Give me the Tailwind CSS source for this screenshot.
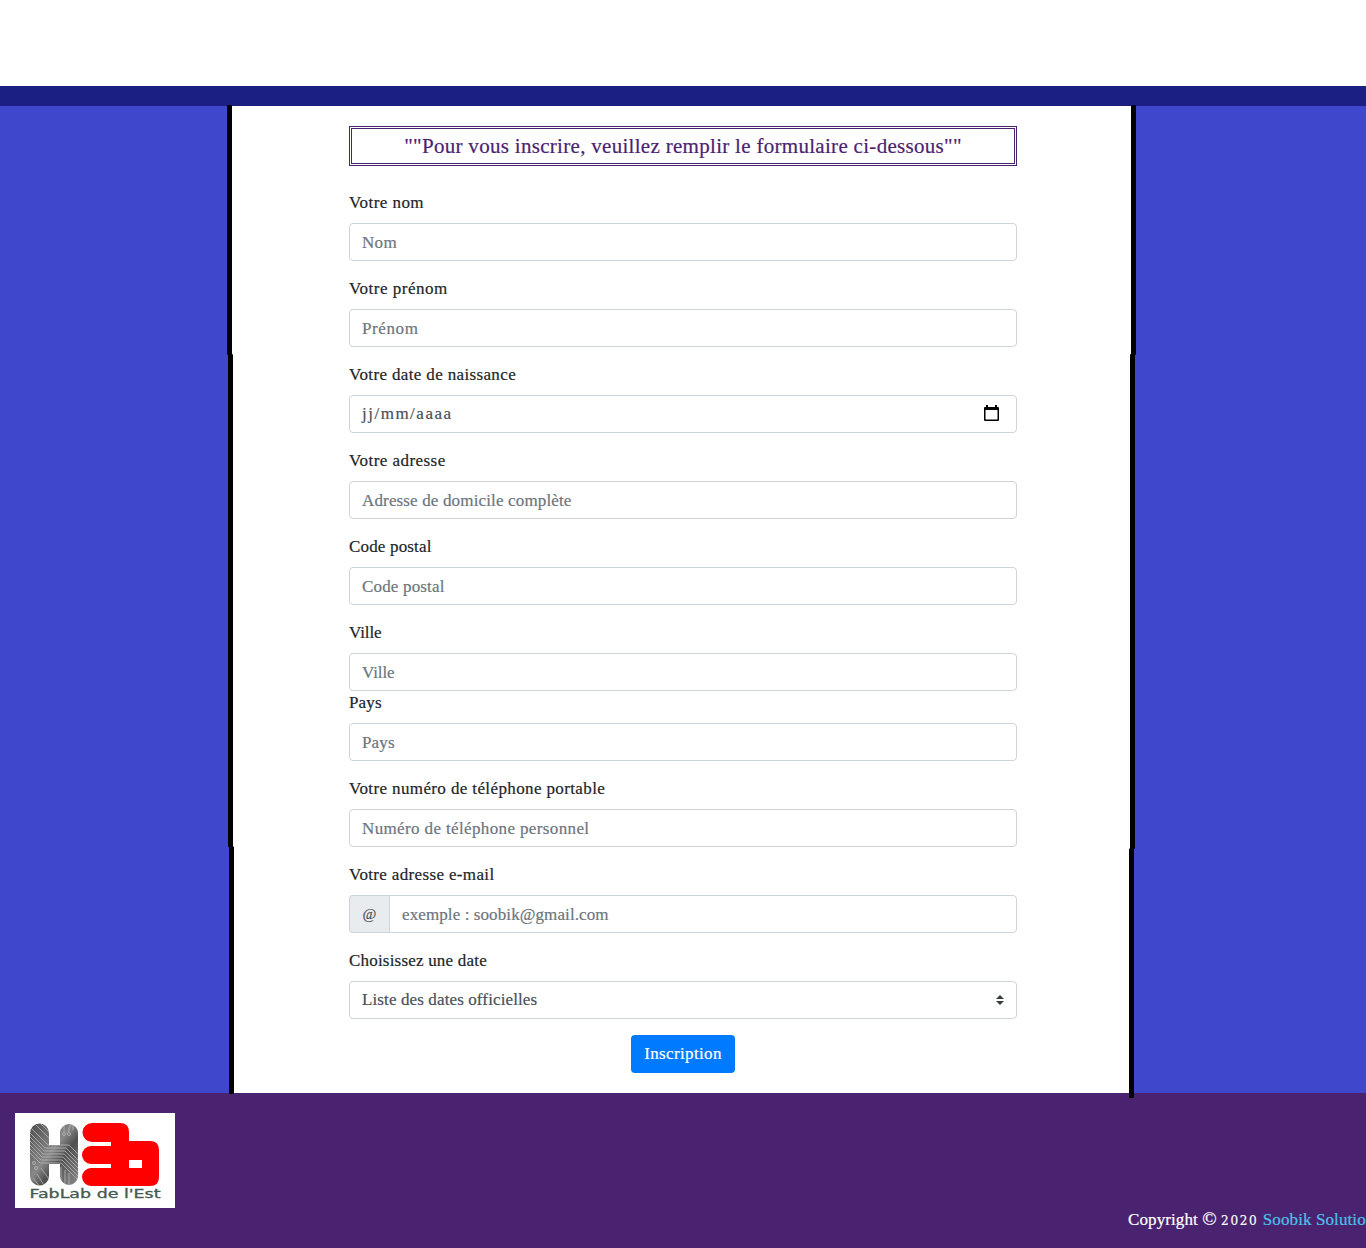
<!DOCTYPE html>
<html lang="fr">
<head>
<meta charset="utf-8">
<title>Inscription</title>
<script src="https://cdn.jsdelivr.net/npm/@tailwindcss/browser@4"></script>
</head>
<body class="relative h-[1248px] overflow-hidden bg-white font-['Georgia','Liberation_Serif',serif] text-[17px] leading-6 text-[#212529] [-webkit-text-stroke:0.2px]">
<header class="h-[106px] border-b-[20px] border-[#1b1f84] bg-white"></header>
<main class="flex h-[987px] justify-center bg-[#3f48cc]">
  <div class="w-[902px] bg-white pt-5">
    <form class="mx-auto w-[668px]">
      <h1 class="mb-[25px] h-10 border-3 border-double border-[#4a2370] text-center text-[21px] leading-[34px] tracking-[0.3px] text-[#4a2370]">""Pour vous inscrire, veuillez remplir le formulaire ci-dessous""</h1>
      <div class="mb-4"><label class="mb-2 block tracking-[0.45px]">Votre nom</label><input class="block h-[38px] w-full rounded border border-[#ced4da] px-3 pt-0.5 tracking-[0.3px] placeholder:text-[#6c757d]" placeholder="Nom"></div>
      <div class="mb-4"><label class="mb-2 block tracking-[0.5px]">Votre prénom</label><input class="block h-[38px] w-full rounded border border-[#ced4da] px-3 pt-0.5 tracking-[0.6px] placeholder:text-[#6c757d]" placeholder="Prénom"></div>
      <div class="mb-4"><label class="mb-2 block tracking-[0.36px]">Votre date de naissance</label>
        <div class="flex h-[38px] items-center justify-between rounded border border-[#ced4da] pr-4 pl-3 text-[#495057]"><span class="tracking-[1.5px]">jj/mm/aaaa</span>
          <svg class="mb-0.5 h-[18px] w-[17px]" viewBox="0 0 17 18"><path d="M3 1h2v2h7V1h2v2h1q1 0 1 1v12q0 1-1 1H2q-1 0-1-1V4q0-1 1-1h1zM2.5 6v9.5h12V6z" fill="#000" fill-rule="evenodd"/></svg>
        </div></div>
      <div class="mb-4"><label class="mb-2 block tracking-[0.45px]">Votre adresse</label><input class="block h-[38px] w-full rounded border border-[#ced4da] px-3 pt-0.5 tracking-[0.15px] placeholder:text-[#6c757d]" placeholder="Adresse de domicile complète"></div>
      <div class="mb-4"><label class="mb-2 block tracking-[0.17px]">Code postal</label><input class="block h-[38px] w-full rounded border border-[#ced4da] px-3 pt-0.5 tracking-[0.17px] placeholder:text-[#6c757d]" placeholder="Code postal"></div>
      <div><label class="mb-2 block tracking-[-0.1px]">Ville</label><input class="block h-[38px] w-full rounded border border-[#ced4da] px-3 pt-0.5 tracking-[-0.1px] placeholder:text-[#6c757d]" placeholder="Ville"></div>
      <div class="mb-4"><label class="mb-2 block tracking-[0.15px]">Pays</label><input class="block h-[38px] w-full rounded border border-[#ced4da] px-3 pt-0.5 tracking-[0.15px] placeholder:text-[#6c757d]" placeholder="Pays"></div>
      <div class="mb-4"><label class="mb-2 block tracking-[0.38px]">Votre numéro de téléphone portable</label><input class="block h-[38px] w-full rounded border border-[#ced4da] px-3 pt-0.5 tracking-[0.37px] placeholder:text-[#6c757d]" placeholder="Numéro de téléphone personnel"></div>
      <div class="mb-4"><label class="mb-2 block tracking-[0.35px]">Votre adresse e-mail</label>
        <div class="flex h-[38px]"><span class="flex w-10 items-center justify-center rounded-l border border-r-0 border-[#ced4da] bg-[#e9ecef] text-[15px] text-[#495057]">@</span><input class="block min-w-0 flex-1 rounded-r border border-[#ced4da] px-3 pt-0.5 tracking-[0.1px] placeholder:text-[#6c757d]" placeholder="exemple : soobik@gmail.com"></div></div>
      <div class="mb-4"><label class="mb-2 block tracking-[0.2px]">Choisissez une date</label>
        <div class="flex h-[38px] items-center justify-between rounded border border-[#ced4da] px-3 text-[#495057]"><span class="tracking-[0.12px]">Liste des dates officielles</span>
          <svg class="h-[10px] w-2" viewBox="0 0 4 5"><path fill="#343a40" d="M2 0L0 2h4zm0 5L0 3h4z"/></svg>
        </div></div>
      <button type="button" class="mx-auto block h-[38px] w-[104px] rounded bg-[#007bff] tracking-[0.35px] text-white">Inscription</button>
    </form>
  </div>
</main>
<footer class="flex h-[155px] justify-between bg-[#4a2370] pt-5 pl-[15px] text-white">
  <svg class="h-[95px] w-40" viewBox="0 0 160 95">
    <defs><linearGradient id="metal" x1="0" x2="1" y1="0" y2="1"><stop offset="0" stop-color="#484848"/><stop offset=".45" stop-color="#888"/><stop offset=".6" stop-color="#505050"/><stop offset="1" stop-color="#909090"/></linearGradient>
    <clipPath id="h"><path d="M15 20a9.5 9.5 0 0 1 19 0v12h11V20a9 9 0 0 1 18 0v43a9 9 0 0 1-18 0V51H34v12a9.5 9.5 0 0 1-19 0z"/></clipPath></defs>
    <path fill="#fff" d="M0 0h160v95H0z"/>
    <g clip-path="url(#h)"><path fill="url(#metal)" d="M14 9h51v65H14z"/>
      <g fill="none" stroke="#b8b8b8" stroke-width=".8"><path d="M12 21l17 17h21l15 15M12 25l16 16h21l16 16M12 29l15 15h21l17 17M12 33l14 14h21l18 18M12 37l13 13h21l19 19M12 17l18 18h21l14 14M14 13l19 19h21l11 11M19 10l15 15M24 9l10 10M46 54v21M50 57v18M54 60v15M22 61l8 13M18 65l7 9M26 55l8 11"/><circle cx="19" cy="50" r="1.5"/><circle cx="21" cy="55" r="1.5"/><circle cx="49" cy="21" r="1.5"/><circle cx="54" cy="21" r="1.5"/><path d="M49 19v-6l2-3M54 19v-4l3-5M58 10v7"/></g></g>
    <path fill="#f00" fill-rule="evenodd" d="M77 10h28q9 0 9 9v9h21q9 0 9 9v27q0 9-9 9H76a8.8 8.8 0 0 1 0-18h20v-4H76a9 9 0 0 1 0-18h20v-4H77a9.5 9.5 0 0 1 0-19zM114 47v8h13v-8z"/>
    <text x="14.5" y="85" font-family="DejaVu Sans" font-size="11.5" textLength="131" lengthAdjust="spacingAndGlyphs" fill="#465a50" stroke="#465a50" stroke-width=".3">FabLab de l'Est</text>
  </svg>
  <p class="mt-[95px] w-[238px] overflow-hidden whitespace-nowrap tracking-[0.1px]">Copyright <span class="text-[19px] leading-none">©</span> <span class="font-['DejaVu_Serif'] text-[12px] leading-none tracking-[1.7px]">2020</span> <a class="text-[#4bc0ea]">Soobik Solutions</a></p>
</footer>
<svg class="pointer-events-none absolute top-0 left-0 h-[1248px] w-[1366px]" viewBox="0 0 1366 1248" fill="#000">
  <rect x="227" y="105" width="5" height="250" rx="1.5"/><rect x="228" y="354" width="5" height="493" rx="1"/><rect x="229" y="846" width="5" height="248" rx="1.5"/>
  <rect x="1131" y="105" width="5" height="250" rx="1.5"/><rect x="1130" y="354" width="5" height="495" rx="1"/><rect x="1129" y="848" width="5" height="250" rx="1.5"/>
</svg>
</body>
</html>
